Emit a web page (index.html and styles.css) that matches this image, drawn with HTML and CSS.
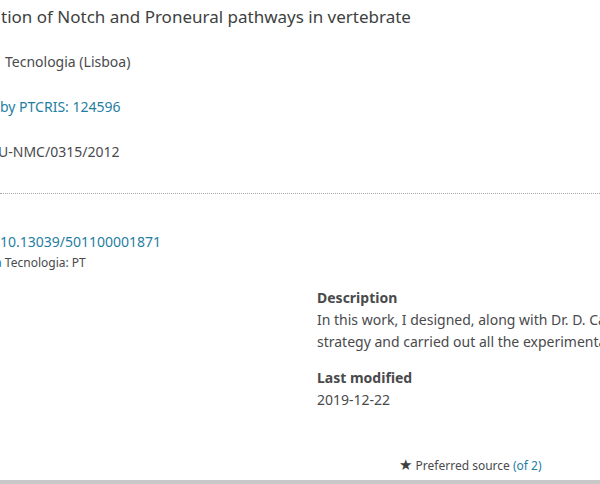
FILE: index.html
```html
<!DOCTYPE html>
<html>
<head>
<meta charset="utf-8">
<link rel="stylesheet" href="styles.css">
</head>
<body>
<div class="page">
  <div class="panel">
    <h1 class="title">tion of Notch and Proneural pathways in vertebrate</h1>
    <div class="facts">
      <p class="fact fact-indent">Tecnologia (Lisboa)</p>
      <p class="fact"><a class="link" href="#">by PTCRIS: 124596</a></p>
      <p class="fact fact-cut">U-NMC/0315/2012</p>
    </div>
    <div class="divider"></div>
    <div class="details">
      <div class="ids">
        <a class="link id-link" href="#">10.13039/501100001871</a>
        <p class="funder"><span class="funder-cut">a</span> Tecnologia: PT</p>
      </div>
      <div class="meta">
        <h3 class="meta-label">Description</h3>
        <p class="meta-text">In this work, I designed, along with Dr. D. Castro, the experimental strategy and carried out all the experimental work described.</p>
        <h3 class="meta-label">Last modified</h3>
        <p class="meta-text">2019-12-22</p>
      </div>
    </div>
    <div class="source">
      <span class="star">★</span> Preferred source <a class="link" href="#">(of 2)</a>
    </div>
  </div>
  <div class="bottom-bar"></div>
</div>
</body>
</html>
```
FILE: styles.css
```css
html, body {
  margin: 0;
  padding: 0;
  background: #fff;
}
body {
  width: 600px;
  height: 484px;
  overflow: hidden;
  font-family: "Noto Sans", "Open Sans", sans-serif;
  color: #494a4c;
}
.page {
  width: 600px;
  height: 484px;
  display: flex;
  flex-direction: column;
}
.panel {
  flex: 1;
  display: flex;
  flex-direction: column;
  min-height: 0;
}
.title {
  margin: 5px 0 0 1px;
  font-size: 17px;
  line-height: 24px;
  font-weight: 400;
  color: #3e3f41;
  white-space: nowrap;
}
.facts {
  display: flex;
  flex-direction: column;
  gap: 25px;
  margin-top: 23px;
}
.fact {
  margin: 0;
  font-size: 14px;
  line-height: 20px;
  white-space: nowrap;
}
.fact-indent {
  padding-left: 5px;
}
.fact-cut {
  margin-left: -2px;
}
.link {
  color: #1f7ea1;
  text-decoration: none;
}
.divider {
  margin-top: 31px;
  border-top: 1px dotted #a8a8a8;
  width: 600px;
}
.details {
  display: grid;
  grid-template-columns: 317px 455px;
  margin-top: 38px;
}
.ids {
  display: flex;
  flex-direction: column;
  gap: 3px;
}
.id-link {
  font-size: 14px;
  line-height: 20px;
}
.funder {
  margin: 0;
  font-size: 12px;
  line-height: 16px;
  white-space: nowrap;
}
.funder-cut {
  color: #1f7ea1;
  margin-left: -5px;
}
.meta {
  padding-top: 55px;
}
.meta-label {
  margin: 0;
  font-size: 14px;
  line-height: 22px;
  font-weight: 700;
}
.meta-text {
  margin: 0 0 14px;
  font-size: 14px;
  line-height: 22px;
}
.source {
  margin-top: auto;
  margin-bottom: 6px;
  padding-left: 399px;
  font-size: 12px;
  line-height: 16px;
}
.star {
  font-family: "DejaVu Sans", sans-serif;
  font-size: 15px;
  line-height: 16px;
  color: #3e3f41;
}
.bottom-bar {
  height: 4px;
  background: #c8c8c8;
}
```
